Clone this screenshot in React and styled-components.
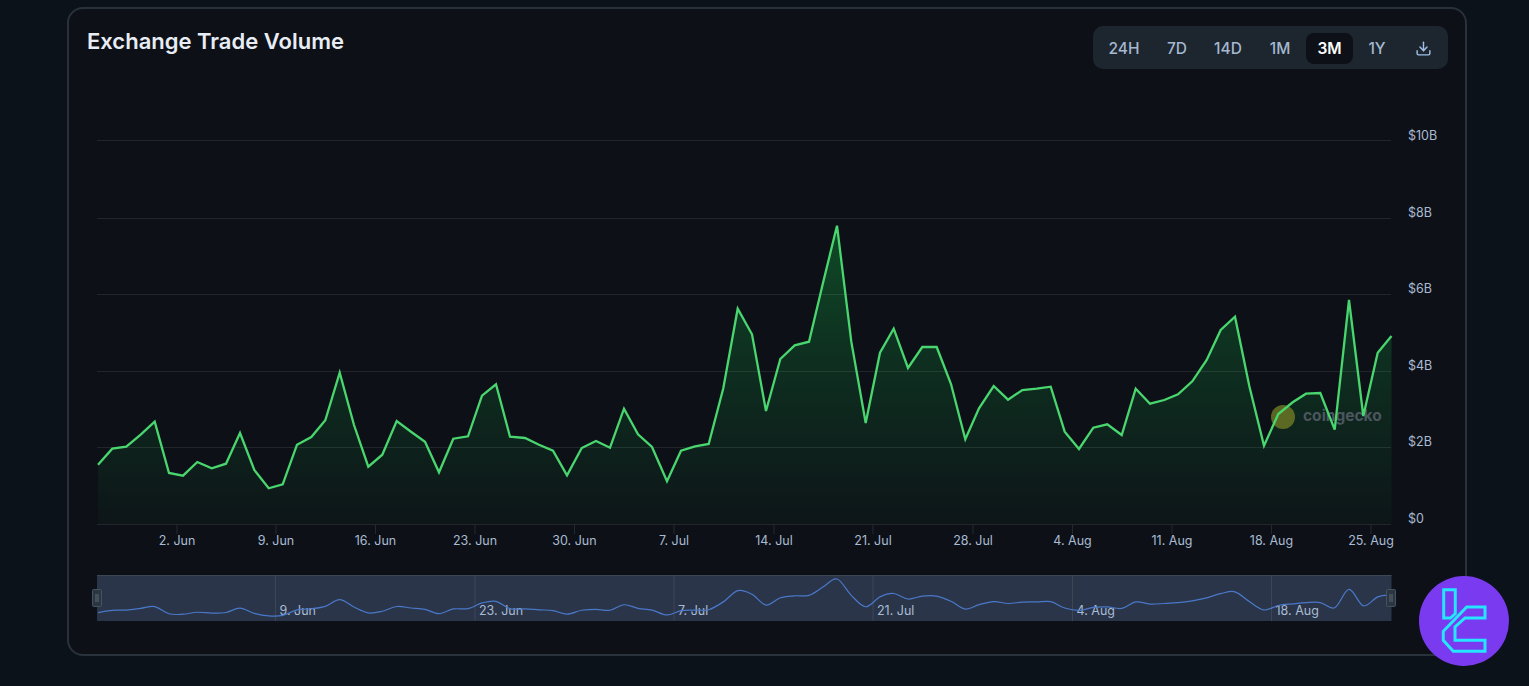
import React from "react";
import styled, { createGlobalStyle } from "styled-components";
import { Download } from "lucide-react";

const GlobalStyle = createGlobalStyle`
  html, body {
    margin: 0;
    height: 100%;
    overflow: hidden;
    background: #0c1219;
    font-family: Inter, "Liberation Sans", sans-serif;
  }
`;

const Page = styled.div`
  position: relative;
  height: 686px;
  padding: 7px 62px 0 67px;
  box-sizing: border-box;
`;

const Card = styled.section`
  width: 1400px;
  height: 649px;
  box-sizing: border-box;
  border: 2px solid #29313b;
  border-radius: 16px;
  background: #0d1117;
  padding: 17px 17px 0 18px;
`;

const Header = styled.header`
  display: flex;
  justify-content: space-between;
  align-items: flex-start;
`;

const Title = styled.h2`
  margin: 1px 0 0;
  font-size: 22px;
  line-height: 28px;
  font-weight: 600;
  color: #e8edf5;
`;

const RangeGroup = styled.div`
  display: flex;
  align-items: center;
  height: 43px;
  box-sizing: border-box;
  padding: 1px 3px 0;
  border-radius: 10px;
  background: #1d262e;
`;

const RangeButton = styled.button`
  width: ${props => props.$width}px;
  height: 31px;
  padding: 0;
  border: 0;
  border-radius: 8px;
  background: ${props => (props.$active ? "#0d1117" : "transparent")};
  color: ${props => (props.$active ? "#ffffff" : "#a5b8d0")};
  font-family: inherit;
  font-size: 15.5px;
  font-weight: ${props => (props.$active ? 600 : 500)};
`;

const IconButton = styled.button`
  display: flex;
  align-items: center;
  justify-content: center;
  width: 44px;
  height: 31px;
  padding: 0;
  border: 0;
  background: transparent;
  color: #a0c0ea;
`;

const ChartSvg = styled.svg`
  display: block;
  margin: 21px 0 0 -20px;
  overflow: visible;
`;

const AxisLabel = styled.text`
  font-family: Inter, "Liberation Sans", sans-serif;
  font-size: 12.5px;
  fill: #a9bbd3;
`;

const Watermark = styled.text`
  font-family: Inter, "Liberation Sans", sans-serif;
  font-size: 15.5px;
  font-weight: 700;
  fill: #4c565f;
`;

const LogoBadge = styled.svg`
  position: absolute;
  left: 1419px;
  top: 576px;
`;

const ranges = [
  { label: "24H", width: 56 },
  { label: "7D", width: 50 },
  { label: "14D", width: 52 },
  { label: "1M", width: 52 },
  { label: "3M", width: 47, active: true },
  { label: "1Y", width: 48 },
];

const points = [
  [98, 464.7], [112.3, 448.7], [126.3, 446.7], [140.7, 434.7], [154.7, 421.7], [169, 473],
  [183, 475.7], [197.3, 462], [211.7, 468.3], [226, 463.7], [240, 433], [254.3, 470],
  [268.7, 488.3], [282.7, 484.3], [297, 444.7], [311.3, 437], [325.3, 420.3], [339.7, 372.7],
  [354, 425], [368.3, 466.7], [382.3, 454.7], [396.7, 421], [411, 431.7], [425, 441.7],
  [439, 472.3], [453.3, 438.7], [468, 436.3], [482, 395.7], [496, 384.3], [510, 436.7],
  [525, 438], [539, 444.7], [553, 450.7], [567, 475.3], [581.7, 448], [596, 441],
  [610, 447.7], [624, 408.7], [638, 434.3], [652, 447], [667, 481.3], [681, 450.7],
  [695, 446.3], [708.7, 444], [723.3, 388.3], [737.7, 308.7], [752, 334.3], [766, 411],
  [780.3, 359], [794.7, 345.3], [809, 341.7], [823, 283], [837, 225.7], [851.3, 341.7],
  [865.7, 423], [880, 352.7], [893.7, 328.7], [908, 368], [922.3, 347], [936.7, 347],
  [951, 384], [965.3, 439.3], [979, 408.3], [993.7, 386], [1008, 399.7], [1022.3, 390],
  [1036.7, 388.7], [1050.7, 386.7], [1064.7, 431.7], [1079, 449], [1093.3, 427.7], [1107.3, 424.3],
  [1121.7, 435], [1135.7, 388.7], [1150, 403.7], [1164.3, 400], [1178, 394.3], [1192.3, 381.3],
  [1206.7, 360], [1220.7, 330], [1235, 316.7], [1249.3, 386], [1264, 445.7], [1278.3, 414],
  [1292.7, 402.3], [1306, 393.7], [1320.3, 393], [1334.7, 429.7], [1349, 300], [1363.3, 416],
  [1377.7, 352.7], [1391.5, 336],
];

const linePath = "M" + points.map(p => p.join(" ")).join("L");
const areaPath = `${linePath}L1391.5 524L98 524Z`;

// same series squeezed into the navigator strip, smoothed like the real one
const navPoints = points.map(([x, y]) => [x, 579 + (y - 225.7) * (37 / 263)]);
const navPath = navPoints.reduce((d, p, i, all) => {
  if (i === 0) return `M${p[0]} ${p[1]}`;
  const prev = all[i - 1];
  const before = all[i - 2] || prev;
  const after = all[i + 1] || p;
  const c1 = [prev[0] + (p[0] - before[0]) / 6, prev[1] + (p[1] - before[1]) / 6];
  const c2 = [p[0] - (after[0] - prev[0]) / 6, p[1] - (after[1] - prev[1]) / 6];
  return `${d}C${c1[0]} ${c1[1]} ${c2[0]} ${c2[1]} ${p[0]} ${p[1]}`;
}, "");

const gridLines = [
  { y: 140.5, labelY: 140, label: "$10B" },
  { y: 218.5, labelY: 217, label: "$8B" },
  { y: 294.5, labelY: 293, label: "$6B" },
  { y: 371.5, labelY: 370, label: "$4B" },
  { y: 447.5, labelY: 446, label: "$2B" },
  { y: 524.5, labelY: 523, label: "$0" },
];

const xTicks = [
  { x: 177, label: "2. Jun" },
  { x: 276, label: "9. Jun" },
  { x: 375.5, label: "16. Jun" },
  { x: 475, label: "23. Jun" },
  { x: 574.5, label: "30. Jun" },
  { x: 674, label: "7. Jul" },
  { x: 774, label: "14. Jul" },
  { x: 873, label: "21. Jul" },
  { x: 973, label: "28. Jul" },
  { x: 1072.5, label: "4. Aug" },
  { x: 1172, label: "11. Aug" },
  { x: 1271.5, label: "18. Aug" },
  { x: 1371, label: "25. Aug" },
];

const navTicks = [
  { x: 275.5, label: "9. Jun" },
  { x: 475, label: "23. Jun" },
  { x: 674, label: "7. Jul" },
  { x: 873, label: "21. Jul" },
  { x: 1072.5, label: "4. Aug" },
  { x: 1271.5, label: "18. Aug" },
];

const Handle = ({ x }) => (
  <g>
    <rect x={x} y={589.5} width={9} height={17} rx={1} fill="#2a3742" stroke="#46525c" />
    <path d={`M${x + 3.5} 594V602M${x + 5.5} 594V602`} stroke="#5d6a75" />
  </g>
);

// the viewBox starts at the svg's place on the page, so its coordinates read as page coordinates
const Chart = () => (
  <ChartSvg width="1400" height="560" viewBox="67 90 1400 560">
    <defs>
      <linearGradient id="area" gradientUnits="userSpaceOnUse" x1="0" y1="225" x2="0" y2="524">
        <stop offset="0" stopColor="#0f4a26" />
        <stop offset="0.45" stopColor="#0e2f20" />
        <stop offset="1" stopColor="#0d1518" />
      </linearGradient>
    </defs>
    <path d={areaPath} fill="url(#area)" />
    {gridLines.map(g => (
      <g key={g.label}>
        <line x1="97" x2="1391" y1={g.y} y2={g.y} stroke="#ffffff" strokeOpacity="0.09" />
        <AxisLabel x="1408" y={g.labelY}>{g.label}</AxisLabel>
      </g>
    ))}
    <circle cx="1283" cy="417" r="12" fill="#6f7b24" fillOpacity="0.8" />
    <Watermark x="1303" y="421">coingecko</Watermark>
    <path d={linePath} fill="none" stroke="#4ad66f" strokeWidth="2.3" strokeLinejoin="miter" />
    {xTicks.map(t => (
      <g key={t.label}>
        <line x1={t.x} x2={t.x} y1="524" y2="534" stroke="#222a2e" />
        <AxisLabel x={t.x} y="545" textAnchor="middle">{t.label}</AxisLabel>
      </g>
    ))}

    <rect x="97" y="575" width="1294.5" height="46" fill="#2a3549" />
    <line x1="97" x2="1391.5" y1="575.5" y2="575.5" stroke="#3c4756" />
    {navTicks.map(t => (
      <g key={t.label}>
        <line x1={t.x} x2={t.x} y1="575" y2="621" stroke="#3c4756" />
        <AxisLabel x={t.x + 4} y="615">{t.label}</AxisLabel>
      </g>
    ))}
    <path d={navPath} fill="none" stroke="#4a78c8" strokeWidth="1.2" />
    <Handle x={92.5} />
    <Handle x={1386.5} />
  </ChartSvg>
);

const Logo = () => (
  <LogoBadge width="90" height="90" viewBox="0 0 90 90">
    <circle cx="45" cy="45" r="45" fill="#7a3bf0" />
    <g fill="none" stroke="#25e5ff" strokeWidth="3" strokeLinejoin="miter">
      <path d="M24.7 13.7H36.3V37.5L31.5 42H24.7Z" />
      <path d="M47.7 31H66V42H46L36 51V64.3H66V75.3H34.3L24.3 64.3V55.3Z" />
    </g>
  </LogoBadge>
);

const App = () => (
  <Page>
    <GlobalStyle />
    <Card>
      <Header>
        <Title>Exchange Trade Volume</Title>
        <RangeGroup>
          {ranges.map(r => (
            <RangeButton key={r.label} $width={r.width} $active={r.active}>
              {r.label}
            </RangeButton>
          ))}
          <IconButton aria-label="Download">
            <Download size={17} strokeWidth={2} />
          </IconButton>
        </RangeGroup>
      </Header>
      <Chart />
    </Card>
    <Logo />
  </Page>
);

export default App;
